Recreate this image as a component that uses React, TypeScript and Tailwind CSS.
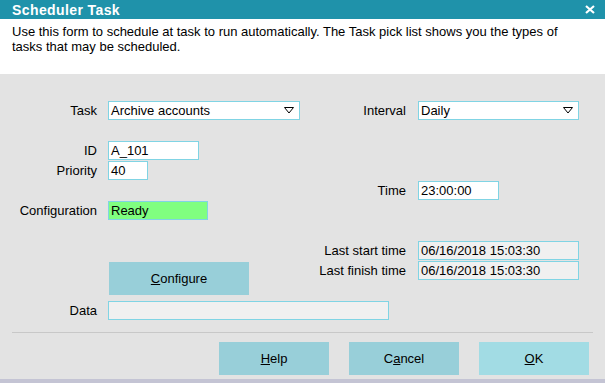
import React from "react";

const font = { fontFamily: '"Liberation Sans", Arial, sans-serif' };

function Arrow() {
  return (
    <svg width="10" height="7" viewBox="0 0 10 7" className="shrink-0">
      <polygon points="0.5,0.5 9.5,0.5 5,6" fill="none" stroke="#000" strokeWidth="1" />
    </svg>
  );
}

function Field({
  w,
  value,
  bg = "bg-white",
  select = false,
}: {
  w: string;
  value: string;
  bg?: string;
  select?: boolean;
}) {
  return (
    <div
      className={`${w} ${bg} h-[19px] border border-[#80d4e4] flex items-center pl-[2px] pr-[5px] text-[13px] leading-none text-black`}
    >
      <span className="flex-1 whitespace-nowrap">{value}</span>
      {select && <Arrow />}
    </div>
  );
}

function LeftRow({ label, children, cls = "" }: { label: string; children: React.ReactNode; cls?: string }) {
  return (
    <div className={`flex items-center ${cls}`}>
      <div className="w-[97px] text-right text-[13px] leading-none text-black whitespace-nowrap">{label}</div>
      <div className="ml-[11px]">{children}</div>
    </div>
  );
}

function RightRow({ label, children, cls = "" }: { label: string; children: React.ReactNode; cls?: string }) {
  return (
    <div className={`flex items-center ${cls}`}>
      <div className="w-[106px] text-right text-[13px] leading-none text-black whitespace-nowrap">{label}</div>
      <div className="ml-[12px]">{children}</div>
    </div>
  );
}

function Btn({ children, bg, cls = "" }: { children: React.ReactNode; bg: string; cls?: string }) {
  return (
    <div className={`${bg} ${cls} h-[33px] w-[110px] flex items-center justify-center text-[13px] text-black`}>
      {children}
    </div>
  );
}

export default function App() {
  return (
    <div className="w-[605px] h-[383px] bg-[#e3e3e3] flex flex-col overflow-hidden" style={font}>
      {/* title bar */}
      <div className="h-[19px] bg-[#1f92aa] flex items-center justify-between pl-[12px] pr-[10px]">
        <span className="text-white font-bold text-[14px] tracking-[0.4px] leading-none">Scheduler Task</span>
        <svg width="10" height="9" viewBox="0 0 10 9">
          <path d="M1 1 L9 8 M9 1 L1 8" stroke="#fff" strokeWidth="2.2" />
        </svg>
      </div>
      {/* description */}
      <div className="h-[55px] bg-white pl-[12px] pr-[20px] pt-[5px] text-[13px] leading-[15px] text-black">
        Use this form to schedule at task to run automatically. The Task pick list shows you the types of tasks that may be scheduled.
      </div>
      {/* form */}
      <div className="flex pt-[27px]">
        <div className="w-[300px] flex flex-col">
          <LeftRow label="Task">
            <Field w="w-[192px]" value="Archive accounts" select />
          </LeftRow>
          <LeftRow label="ID" cls="mt-[21px]">
            <Field w="w-[91px]" value="A_101" />
          </LeftRow>
          <LeftRow label="Priority" cls="mt-[1px]">
            <Field w="w-[40px]" value="40" />
          </LeftRow>
          <LeftRow label="Configuration" cls="mt-[21px]">
            <Field w="w-[100px]" value="Ready" bg="bg-[#80ff80]" />
          </LeftRow>
          <div className="mt-[42px] ml-[109px] w-[140px] h-[33px] bg-[#98cfd9] flex items-center justify-center text-[13px] text-black">
            <span>
              <span className="underline">C</span>onfigure
            </span>
          </div>
        </div>
        <div className="flex flex-col">
          <RightRow label="Interval">
            <Field w="w-[161px]" value="Daily" select />
          </RightRow>
          <RightRow label="Time" cls="mt-[61px]">
            <Field w="w-[81px]" value="23:00:00" />
          </RightRow>
          <RightRow label="Last start time" cls="mt-[41px]">
            <Field w="w-[161px]" value="06/16/2018 15:03:30" bg="bg-[#f0f0f0]" />
          </RightRow>
          <RightRow label="Last finish time" cls="mt-[1px]">
            <Field w="w-[161px]" value="06/16/2018 15:03:30" bg="bg-[#f0f0f0]" />
          </RightRow>
        </div>
      </div>
      <LeftRow label="Data" cls="mt-[6px]">
        <Field w="w-[281px]" value="" bg="bg-[#f0f0f0]" />
      </LeftRow>
      <div className="mt-[12px] ml-[12px] w-[581px] h-[1px] bg-[#c8c8c8]" />
      <div className="mt-[9px] flex pl-[219px] gap-[20px]">
        <Btn bg="bg-[#98cfd9]">
          <span>
            <span className="underline">H</span>elp
          </span>
        </Btn>
        <Btn bg="bg-[#98cfd9]">
          <span>
            C<span className="underline">a</span>ncel
          </span>
        </Btn>
        <Btn bg="bg-[#a2dce4]">
          <span>
            <span className="underline">O</span>K
          </span>
        </Btn>
      </div>
      <div className="mt-[4px] flex-1 bg-[#c4c4d4]" />
    </div>
  );
}
